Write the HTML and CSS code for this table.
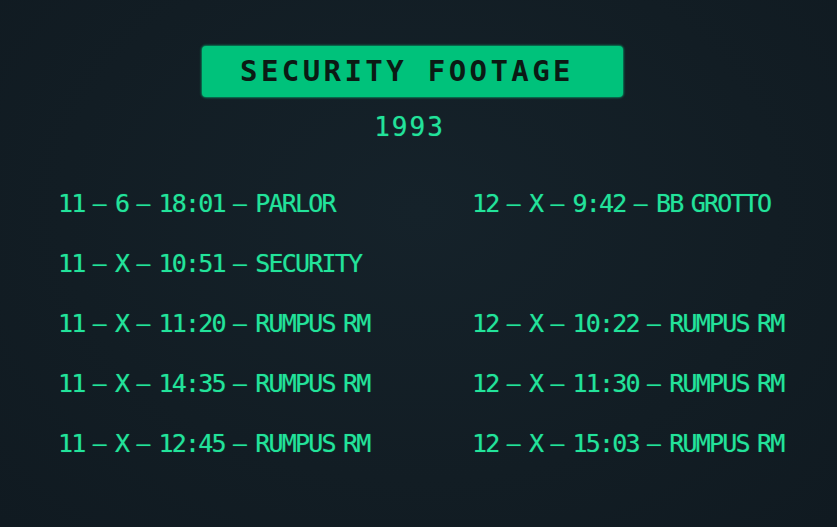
FILE: index.html
```html
<!DOCTYPE html>
<html>
<head>
<meta charset="utf-8">
<link rel="stylesheet" href="styles.css">
</head>
<body>
<main class="page">
  <header class="head">
    <h1 class="banner">SECURITY FOOTAGE</h1>
    <div class="year">1993</div>
  </header>
  <section class="log">
    <div class="entry">11 <span class="dash">–</span> 6 <span class="dash">–</span> 18:01 <span class="dash">–</span> PARLOR</div>
    <div class="entry">12 <span class="dash">–</span> X <span class="dash">–</span> 9:42 <span class="dash">–</span> BB GROTTO</div>
    <div class="entry">11 <span class="dash">–</span> X <span class="dash">–</span> 10:51 <span class="dash">–</span> SECURITY</div>
    <div class="entry"></div>
    <div class="entry">11 <span class="dash">–</span> X <span class="dash">–</span> 11:20 <span class="dash">–</span> RUMPUS RM</div>
    <div class="entry">12 <span class="dash">–</span> X <span class="dash">–</span> 10:22 <span class="dash">–</span> RUMPUS RM</div>
    <div class="entry">11 <span class="dash">–</span> X <span class="dash">–</span> 14:35 <span class="dash">–</span> RUMPUS RM</div>
    <div class="entry">12 <span class="dash">–</span> X <span class="dash">–</span> 11:30 <span class="dash">–</span> RUMPUS RM</div>
    <div class="entry">11 <span class="dash">–</span> X <span class="dash">–</span> 12:45 <span class="dash">–</span> RUMPUS RM</div>
    <div class="entry">12 <span class="dash">–</span> X <span class="dash">–</span> 15:03 <span class="dash">–</span> RUMPUS RM</div>
  </section>
</main>
</body>
</html>
```

FILE: styles.css
```css
html, body {
  margin: 0;
  padding: 0;
  height: 100%;
}
body {
  background: radial-gradient(ellipse at 50% 40%, #15222a 0%, #121d24 60%, #101a21 100%);
  font-family: "DejaVu Sans Mono", "Liberation Mono", monospace;
  overflow: hidden;
}
.page {
  width: 825px;
  padding-top: 46px;
  display: flex;
  flex-direction: column;
}
.head {
  display: flex;
  flex-direction: column;
  align-items: center;
}
.banner {
  margin: 0;
  width: 421px;
  height: 51px;
  box-sizing: border-box;
  background: #00c27b;
  border-radius: 4px;
  box-shadow: 0 0 2px 1px rgba(0, 194, 123, 0.6);
  color: #0b1a14;
  font-size: 29px;
  font-weight: bold;
  letter-spacing: 3.4px;
  line-height: 51px;
  text-align: center;
  padding-right: 11px;
}
.year {
  margin-top: 17px;
  color: #22e39a;
  font-size: 26px;
  letter-spacing: 2px;
  line-height: 26px;
  padding-right: 6px;
  text-shadow: 0 0 1px rgba(34, 227, 154, 0.6);
}
.log {
  margin-top: 52px;
  padding-left: 58px;
  display: grid;
  grid-template-columns: 414px auto;
  grid-auto-rows: 60px;
}
.entry {
  color: #22e39a;
  font-size: 25px;
  line-height: 24px;
  letter-spacing: -1.8px;
  word-spacing: -5px;
  white-space: pre;
  text-shadow: 0 0 1px rgba(34, 227, 154, 0.5);
}
.dash {
  font-size: 23px;
  letter-spacing: 0;
}
```
